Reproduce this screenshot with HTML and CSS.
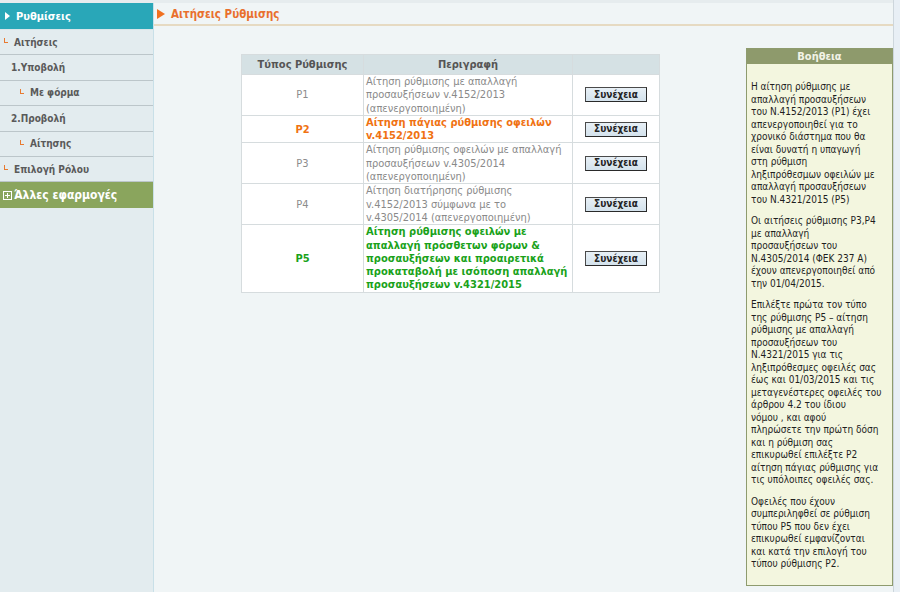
FILE: index.html
```html
<!DOCTYPE html>
<html lang="el">
<head>
<meta charset="utf-8">
<title>Αιτήσεις Ρύθμισης</title>
<link rel="stylesheet" href="styles.css">
</head>
<body>
<div class="page">
  <aside class="sidebar">
    <div class="side-head"><span class="side-tri"></span>Ρυθμίσεις</div>
    <ul class="menu">
      <li class="item lv1"><span class="mark"></span>Αιτήσεις</li>
      <li class="item lv2">1.Υποβολή</li>
      <li class="item lv3"><span class="mark"></span>Με φόρμα</li>
      <li class="item lv2">2.Προβολή</li>
      <li class="item lv3"><span class="mark"></span>Αίτησης</li>
      <li class="item lv1"><span class="mark"></span>Επιλογή Ρόλου</li>
    </ul>
    <div class="side-apps">
      <svg class="plus-box" width="9" height="9" viewBox="0 0 9 9"><rect x="0.5" y="0.5" width="8" height="8" fill="none" stroke="#ffffff" stroke-width="1"/><path d="M2 4.5H7M4.5 2V7" stroke="#ffffff" stroke-width="1"/></svg>
      Άλλες εφαρμογές
    </div>
  </aside>
  <main class="main">
    <div class="title"><span class="title-tri"></span>Αιτήσεις Ρύθμισης</div>
    <div class="content">
      <table class="grid">
        <colgroup><col class="c1"><col class="c2"><col class="c3"></colgroup>
        <thead>
          <tr><th>Τύπος Ρύθμισης</th><th>Περιγραφή</th><th></th></tr>
        </thead>
        <tbody>
          <tr>
            <td class="code">P1</td>
            <td class="desc">Αίτηση ρύθμισης με απαλλαγή<br>προσαυξήσεων v.4152/2013<br>(απενεργοποιημένη)</td>
            <td class="act"><button class="btn">Συνέχεια</button></td>
          </tr>
          <tr class="orange">
            <td class="code">P2</td>
            <td class="desc">Αίτηση πάγιας ρύθμισης οφειλών<br>v.4152/2013</td>
            <td class="act"><button class="btn">Συνέχεια</button></td>
          </tr>
          <tr>
            <td class="code">P3</td>
            <td class="desc">Αίτηση ρύθμισης οφειλών με απαλλαγή<br>προσαυξήσεων v.4305/2014<br>(απενεργοποιημένη)</td>
            <td class="act"><button class="btn">Συνέχεια</button></td>
          </tr>
          <tr>
            <td class="code">P4</td>
            <td class="desc">Αίτηση διατήρησης ρύθμισης<br>v.4152/2013 σύμφωνα με το<br>v.4305/2014 (απενεργοποιημένη)</td>
            <td class="act"><button class="btn">Συνέχεια</button></td>
          </tr>
          <tr class="green">
            <td class="code">P5</td>
            <td class="desc">Αίτηση ρύθμισης οφειλών με<br>απαλλαγή πρόσθετων φόρων &amp;<br>προσαυξήσεων και προαιρετικά<br>προκαταβολή με ισόποση απαλλαγή<br>προσαυξήσεων v.4321/2015</td>
            <td class="act"><button class="btn">Συνέχεια</button></td>
          </tr>
        </tbody>
      </table>
      <aside class="help">
        <div class="help-head">Βοήθεια</div>
        <div class="help-body">
          <p>Η αίτηση ρύθμισης με<br>απαλλαγή προσαυξήσεων<br>του Ν.4152/2013 (P1) έχει<br>απενεργοποιηθεί για το<br>χρονικό διάστημα που θα<br>είναι δυνατή η υπαγωγή<br>στη ρύθμιση<br>ληξιπρόθεσμων οφειλών με<br>απαλλαγή προσαυξήσεων<br>του Ν.4321/2015 (P5)</p>
          <p>Οι αιτήσεις ρύθμισης P3,P4<br>με απαλλαγή<br>προσαυξήσεων του<br>Ν.4305/2014 (ΦΕΚ 237 Α)<br>έχουν απενεργοποιηθεί από<br>την 01/04/2015.</p>
          <p>Επιλέξτε πρώτα τον τύπο<br>της ρύθμισης P5 – αίτηση<br>ρύθμισης με απαλλαγή<br>προσαυξήσεων του<br>Ν.4321/2015 για τις<br>ληξιπρόθεσμες οφειλές σας<br>έως και 01/03/2015 και τις<br>μεταγενέστερες οφειλές του<br>άρθρου 4.2 του ίδιου<br>νόμου , και αφού<br>πληρώσετε την πρώτη δόση<br>και η ρύθμιση σας<br>επικυρωθεί επιλέξτε P2<br>αίτηση πάγιας ρύθμισης για<br>τις υπόλοιπες οφειλές σας.</p>
          <p>Οφειλές που έχουν<br>συμπεριληφθεί σε ρύθμιση<br>τύπου P5 που δεν έχει<br>επικυρωθεί εμφανίζονται<br>και κατά την επιλογή του<br>τύπου ρύθμισης P2.</p>
        </div>
      </aside>
    </div>
  </main>
  <div class="edge"></div>
</div>
</body>
</html>
```

FILE: styles.css
```css
* { box-sizing: border-box; }
html, body { margin: 0; padding: 0; }
body {
  font-family: "DejaVu Sans Condensed", "DejaVu Sans", Verdana, sans-serif;
  font-stretch: condensed;
  background: #f0f5f6;
  width: 900px;
  height: 592px;
  overflow: hidden;
}
.page {
  display: flex;
  height: 592px;
  border-top: 3px solid #e6ecee;
}

/* Sidebar */
.sidebar {
  width: 154px;
  flex: none;
  background: #e3ecef;
  border-right: 1px solid #c9e0e8;
}
.side-head {
  height: 27px;
  background: #29a7b8;
  color: #ffffff;
  font-weight: bold;
  font-size: 11px;
  display: flex;
  align-items: center;
  padding-left: 5px;
  border-bottom: 1px solid #d8e6ea;
}
.side-tri {
  width: 0;
  height: 0;
  border-top: 4px solid transparent;
  border-bottom: 4px solid transparent;
  border-left: 5px solid #ffffff;
  margin-right: 6px;
}
.menu {
  list-style: none;
  margin: 0;
  padding: 0;
}
.item {
  height: 25.4px;
  border-bottom: 1px solid #bcc6ca;
  font-size: 10px;
  font-weight: bold;
  color: #5a5a5a;
  display: flex;
  align-items: center;
}
.lv1 { padding-left: 4px; }
.lv2 { padding-left: 11px; }
.lv3 { padding-left: 20px; }
.mark {
  width: 4px;
  height: 5px;
  border-left: 1px solid #e87a30;
  border-bottom: 1px solid #e87a30;
  margin-right: 6px;
  margin-top: -3px;
}
.side-apps {
  height: 26px;
  background: #8aa55d;
  color: #ffffff;
  font-weight: bold;
  font-size: 12px;
  display: flex;
  align-items: center;
  padding-left: 3px;
  gap: 2px;
}
.plus-box { flex: none; }

/* Main */
.main {
  flex: 1;
  min-width: 0;
}
.title {
  height: 23px;
  border-bottom: 2px solid #e6dac2;
  display: flex;
  align-items: center;
  padding-left: 3px;
  color: #e9702e;
  font-weight: bold;
  font-size: 11.5px;
}
.title-tri {
  width: 0;
  height: 0;
  border-top: 5px solid transparent;
  border-bottom: 5px solid transparent;
  border-left: 8px solid #f07020;
  margin-right: 6px;
}
.content {
  display: flex;
  justify-content: space-between;
  align-items: flex-start;
  padding-left: 87px;
}

/* Table */
.grid {
  margin-top: 28px;
  width: 418px;
  table-layout: fixed;
  border-collapse: collapse;
  background: #ffffff;
  font-size: 11px;
  line-height: 13.3px;
}
.c1 { width: 122px; }
.c2 { width: 209px; }
.c3 { width: 87px; }
.grid th, .grid td {
  border: 1px solid #d6dcde;
  padding: 0 2px;
  white-space: nowrap;
}
.grid th {
  background: #d5e1e4;
  color: #555555;
  font-weight: bold;
  height: 20px;
}
.code {
  text-align: center;
  color: #8c8c8c;
}
.desc {
  color: #8a8a8a;
  vertical-align: middle;
}
.act { text-align: center; }
.orange .code, .orange .desc { color: #f07212; font-weight: bold; }
.green .code, .green .desc { color: #1aa21a; font-weight: bold; }
.btn {
  width: 62px;
  height: 15px;
  padding: 0;
  font-family: "DejaVu Sans Condensed", "DejaVu Sans", Verdana, sans-serif;
  font-stretch: condensed;
  font-size: 10px;
  font-weight: bold;
  color: #222222;
  background: linear-gradient(#e8f0f6, #d4e2ec);
  border: 1px solid #4a4a4a;
  border-right-color: #2a2a2a;
  border-bottom-color: #2a2a2a;
  line-height: 12px;
  display: inline-block;
  vertical-align: middle;
}

/* Help */
.help {
  width: 147px;
  flex: none;
  margin-top: 22px;
  border: 1px solid #8e9b6e;
  background: #f3f6df;
}
.help-head {
  height: 15px;
  background: #8e9a6c;
  color: #f2f3e6;
  font-weight: bold;
  font-size: 11px;
  text-align: center;
  line-height: 15px;
}
.help-body {
  padding: 17px 2px 5px 4px;
  font-size: 10px;
  line-height: 12.5px;
  color: #1e1e1e;
  white-space: nowrap;
}
.help-body p {
  margin: 0 0 9px 0;
}

/* Right edge */
.edge {
  width: 7px;
  flex: none;
  border-left: 1px solid #cdd6dc;
  background: #e8eff5;
  margin-top: -3px;
}
```
